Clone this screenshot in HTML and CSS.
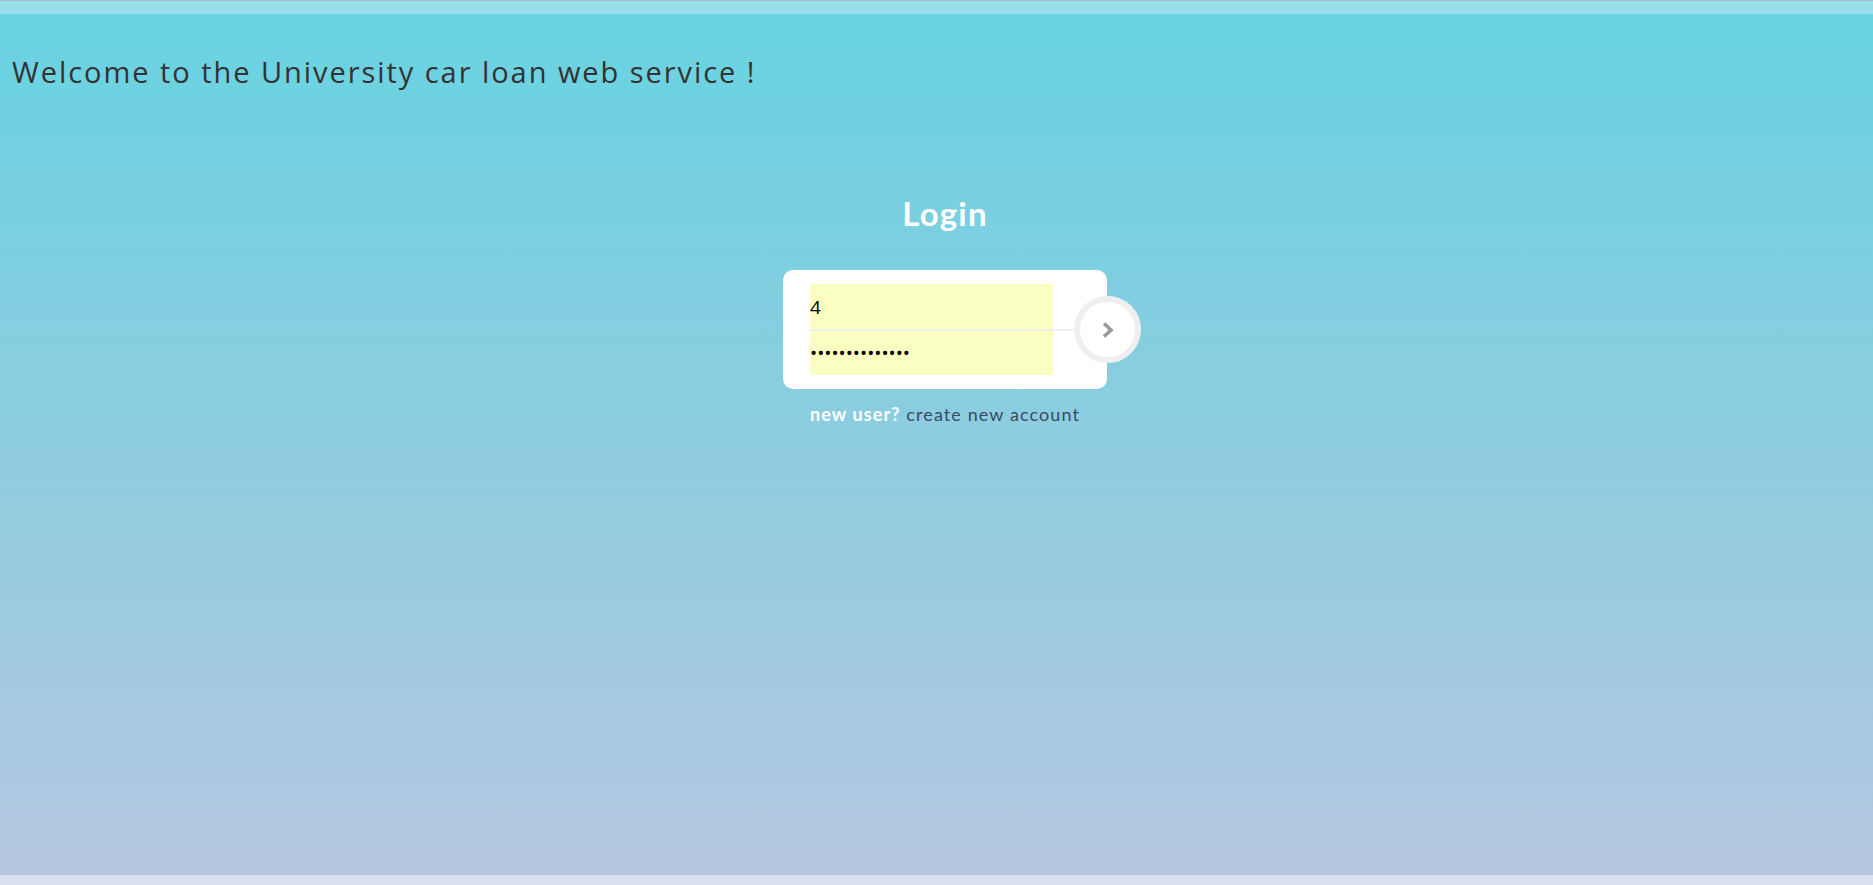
FILE: index.html
```html
<!DOCTYPE html>
<html lang="en">
<head>
<meta charset="utf-8">
<title>University car loan</title>
<link rel="stylesheet" href="styles.css">
</head>
<body>
<div class="page">
  <div class="topline"></div>
  <div class="topband"></div>
  <main class="main">
    <h1 class="welcome">Welcome to the University car loan web service !</h1>
    <section class="login">
      <h2 class="login-title">Login</h2>
      <form class="card">
        <div class="fields">
          <input class="field field-user" type="text" value="4">
          <div class="divider"></div>
          <input class="field field-pass" type="password" value="abcdefghijklmn">
        </div>
        <button class="go" type="button" aria-label="Log in">
          <svg width="16" height="18" viewBox="0 0 16 18"><path d="M4 2.5 L11 9 L4 15.5" fill="none" stroke="#999999" stroke-width="3.6"/></svg>
        </button>
      </form>
      <p class="signup"><span class="signup-q">new user?</span> <a class="signup-link" href="#">create new account</a></p>
    </section>
  </main>
  <div class="bottomband"></div>
</div>
</body>
</html>
```

FILE: styles.css
```css
html, body {
  margin: 0;
  padding: 0;
  height: 100%;
}
body {
  font-family: "Open Sans", "DejaVu Sans", sans-serif;
}
.page {
  display: flex;
  flex-direction: column;
  height: 885px;
}
.topline {
  height: 1px;
  background: #b2b8c9;
}
.topband {
  height: 13px;
  background: #97e0ea;
}
.main {
  flex: 1;
  background: linear-gradient(to bottom, #68d3e1 0%, #b4c6df 100%);
  padding: 0 12px;
}
.welcome {
  margin: 38px 0 0 0;
  font-size: 29px;
  font-weight: 400;
  color: #333333;
  line-height: 40px;
  letter-spacing: 1.95px;
}
.login {
  display: flex;
  flex-direction: column;
  align-items: center;
  padding-left: 17px;
}
.login-title {
  margin: 101px 0 0 0;
  font-family: "Lato", sans-serif;
  font-size: 33px;
  font-weight: 700;
  color: #ffffff;
  line-height: 40px;
  letter-spacing: 1.2px;
}
.card {
  position: relative;
  margin-top: 37px;
  width: 324px;
  height: 119px;
  box-sizing: border-box;
  padding: 14px 0 14px 27px;
  background: #ffffff;
  border-radius: 10px;
}
.fields {
  display: flex;
  flex-direction: column;
  width: 243px;
}
.field {
  display: block;
  border: 0;
  outline: 0;
  margin: 0;
  padding: 0;
  width: 243px;
  background: #fafec0;
  color: #000000;
  font-family: "Open Sans", sans-serif;
  font-size: 19px;
}
.field-user {
  height: 45px;
}
.field-pass {
  height: 44px;
  font-size: 19px;
}
.divider {
  height: 2px;
  width: 270px;
  background: #eeeeee;
}
.go {
  position: absolute;
  left: 291px;
  top: 26px;
  width: 67px;
  height: 67px;
  box-sizing: border-box;
  border: 6px solid #efefef;
  border-radius: 50%;
  background: #ffffff;
  display: flex;
  align-items: center;
  justify-content: center;
  padding: 0;
}
.signup {
  margin: 14px 0 0 0;
  font-family: "Lato", sans-serif;
  font-size: 18px;
  letter-spacing: 1.1px;
}
.signup-q {
  color: #ffffff;
  font-weight: 700;
}
.signup-link {
  color: #3b4a63;
  text-decoration: none;
}
.bottomband {
  height: 10px;
  background: #dae0ee;
}
```
